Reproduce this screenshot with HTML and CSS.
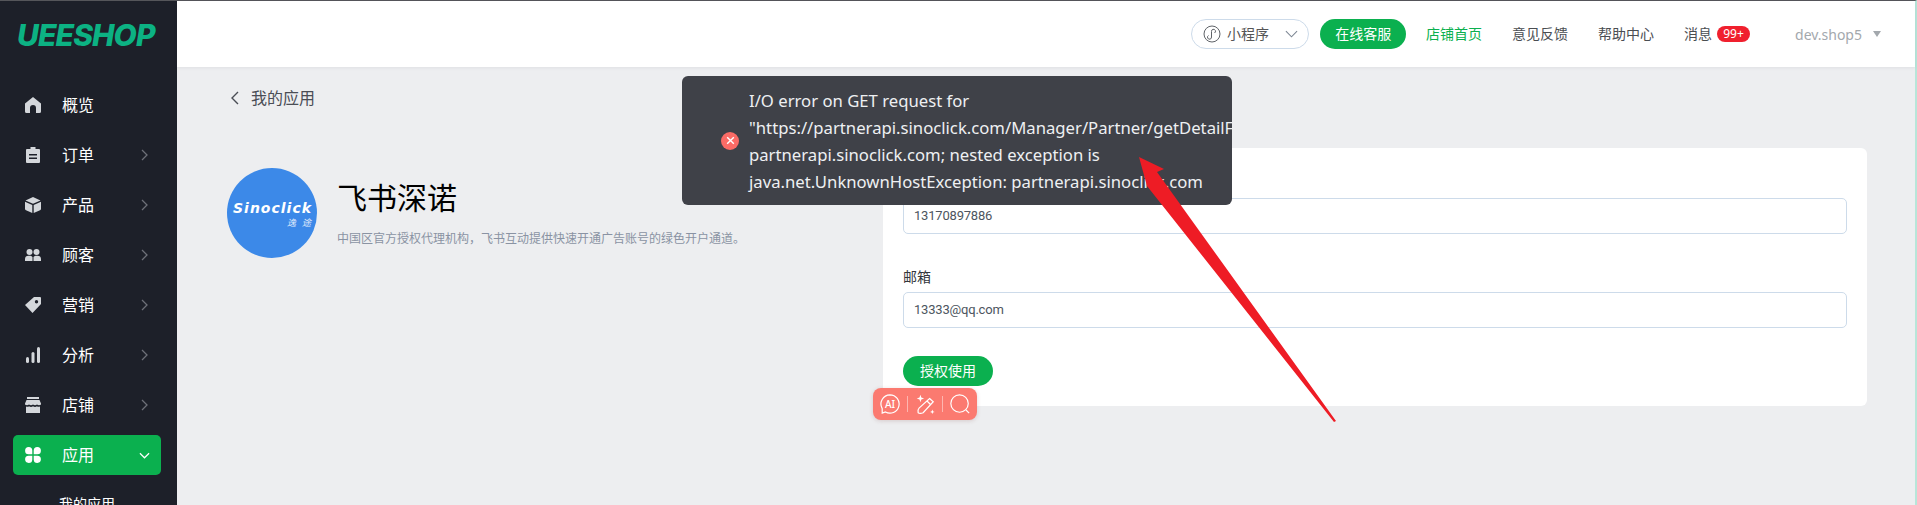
FILE: index.html
```html
<!DOCTYPE html>
<html lang="zh-CN">
<head>
<meta charset="utf-8">
<title>我的应用</title>
<link rel="stylesheet" href="styles.css">
</head>
<body>
<div class="app">
  <aside class="sidebar">
    <div class="logo">UEESHOP</div>
    <nav class="nav">
      <a class="nav-item">
        <svg class="nav-icon" viewBox="0 0 16 16"><path d="M8 0 16 6.500V14.500A1.500 1.500 0 0 1 14.500 16H11V11A3 3 0 0 0 5 11V16H1.500A1.500 1.500 0 0 1 0 14.500V6.500Z"/></svg>
        <span class="nav-label">概览</span>
      </a>
      <a class="nav-item">
        <svg class="nav-icon" viewBox="0 0 16 16"><path fill-rule="evenodd" d="M5.500 0H10.500V2H14A1 1 0 0 1 15 3V15A1 1 0 0 1 14 16H2A1 1 0 0 1 1 15V3A1 1 0 0 1 2 2H5.500ZM4 7V8.500H12V7ZM4 10.500V12H12V10.500Z"/></svg>
        <span class="nav-label">订单</span>
        <svg class="nav-arrow" viewBox="0 0 7 12"><path d="M1 1 6 6 1 11"/></svg>
      </a>
      <a class="nav-item">
        <svg class="nav-icon" viewBox="0 0 16 16"><path d="M8 0 15.500 3.400 8 6.800 .5 3.400ZM0 4.800 7.300 8.100V16L1 13.200A1.500 1.500 0 0 1 0 12ZM16 4.800V12A1.500 1.500 0 0 1 15 13.200L8.700 16V8.100Z"/></svg>
        <span class="nav-label">产品</span>
        <svg class="nav-arrow" viewBox="0 0 7 12"><path d="M1 1 6 6 1 11"/></svg>
      </a>
      <a class="nav-item">
        <svg class="nav-icon" viewBox="0 0 16 16"><circle cx="4.500" cy="5" r="3"/><circle cx="11.500" cy="5" r="3"/><path d="M0 14V12A3.500 3.500 0 0 1 3.500 8.700H5.500A3.500 3.500 0 0 1 7.500 10V14ZM8.500 14V10A3.500 3.500 0 0 1 10.500 8.700H12.500A3.500 3.500 0 0 1 16 12V14Z"/></svg>
        <span class="nav-label">顾客</span>
        <svg class="nav-arrow" viewBox="0 0 7 12"><path d="M1 1 6 6 1 11"/></svg>
      </a>
      <a class="nav-item">
        <svg class="nav-icon" viewBox="0 0 16 16"><path fill-rule="evenodd" d="M9 0H15A1 1 0 0 1 16 1V7L7.500 16 0 8ZM11.500 3A1.700 1.700 0 1 0 11.500 6.400 1.700 1.700 0 1 0 11.500 3Z"/></svg>
        <span class="nav-label">营销</span>
        <svg class="nav-arrow" viewBox="0 0 7 12"><path d="M1 1 6 6 1 11"/></svg>
      </a>
      <a class="nav-item">
        <svg class="nav-icon" viewBox="0 0 16 16"><rect x="1" y="10" width="3" height="6" rx="1.500"/><rect x="6.500" y="5" width="3" height="11" rx="1.500"/><rect x="12" y="0" width="3" height="16" rx="1.500"/></svg>
        <span class="nav-label">分析</span>
        <svg class="nav-arrow" viewBox="0 0 7 12"><path d="M1 1 6 6 1 11"/></svg>
      </a>
      <a class="nav-item">
        <svg class="nav-icon" viewBox="0 0 16 16"><path d="M2 0H14V2H2ZM1.500 3H14.500L16 6.500V7.500Q14 9 12 7.500 10 9 8 7.500 6 9 4 7.500 2 9 0 7.500V6.500ZM1 9.500Q3 10.200 4 9.300 6 10.500 8 9.300 10 10.500 12 9.300 13 10.200 15 9.500V16H1Z"/></svg>
        <span class="nav-label">店铺</span>
        <svg class="nav-arrow" viewBox="0 0 7 12"><path d="M1 1 6 6 1 11"/></svg>
      </a>
      <a class="nav-item is-active">
        <svg class="nav-icon" viewBox="0 0 16 16"><path d="M7.300 7.300H3.600A3.600 3.600 0 1 1 7.300 3.600ZM8.700 7.300V3.600A3.600 3.600 0 1 1 12.400 7.300ZM7.300 8.700V12.400A3.600 3.600 0 1 1 3.600 8.700ZM8.700 8.700H12.400A3.600 3.600 0 1 1 8.700 12.400Z"/></svg>
        <span class="nav-label">应用</span>
        <svg class="nav-arrow-down" viewBox="0 0 12 7"><path d="M1 1 6 6 11 1"/></svg>
      </a>
      <a class="nav-sub">我的应用</a>
    </nav>
  </aside>

  <main class="main">
    <header class="topbar">
      <div class="mini-select">
        <svg class="mini-icon" viewBox="0 0 18 18"><circle cx="9" cy="9" r="8"/><path d="M5.500 10.500A2 2 0 1 0 8.500 12V6.500A2 2 0 1 1 11.500 8"/></svg>
        <span class="lift">小程序</span>
        <svg class="mini-arrow" viewBox="0 0 14 8"><path d="M1 1 7 7 13 1"/></svg>
      </div>
      <a class="service-btn">在线客服</a>
      <a class="top-link is-green">店铺首页</a>
      <a class="top-link">意见反馈</a>
      <a class="top-link">帮助中心</a>
      <a class="top-link msg"><span class="lift">消息</span><span class="badge">99+</span></a>
      <div class="user">dev.shop5<span class="caret"></span></div>
    </header>

    <div class="content">
      <div class="back">
        <svg class="back-icon" viewBox="0 0 9 14"><path d="M8 1 2 7 8 13"/></svg>
        <span class="lift">我的应用</span>
      </div>
      <div class="detail">
        <section class="app-info">
          <div class="avatar">
            <span class="brand">Sinoclick</span>
            <span class="brand-cn">逸途</span>
          </div>
          <div class="app-text">
            <h1 class="app-title">飞书深诺</h1>
            <p class="app-desc">中国区官方授权代理机构，飞书互动提供快速开通广告账号的绿色开户通道。</p>
          </div>
        </section>
        <section class="card">
          <div class="field">
            <label class="field-label">手机</label>
            <div class="input">13170897886</div>
          </div>
          <div class="field">
            <label class="field-label">邮箱</label>
            <div class="input">13333@qq.com</div>
          </div>
          <div class="actions"><a class="primary-btn">授权使用</a></div>
        </section>
      </div>
    </div>
  </main>
</div>

<div class="toast">
  <span class="toast-icon"><svg viewBox="0 0 10 10"><path d="M2 2 8 8M8 2 2 8"/></svg></span>
  <div class="toast-text">
    <div class="toast-line">I/O error on GET request for</div>
    <div class="toast-line">"https://partnerapi.sinoclick.com/Manager/Partner/getDetailForPartner":</div>
    <div class="toast-line">partnerapi.sinoclick.com; nested exception is</div>
    <div class="toast-line">java.net.UnknownHostException: partnerapi.sinoclick.com</div>
  </div>
</div>

<svg class="annotation" viewBox="0 0 1917 505"><polygon points="1139,157 1164,169 1157,172 1336,421 1334,422 1147,186"/></svg>

<div class="ai-bar">
  <svg class="ai-icon" viewBox="0 0 24 24"><path d="M12 2A10 10 0 1 1 7 20.700L3.500 22V17A10 10 0 0 1 12 2Z"/><text x="12" y="16" text-anchor="middle">AI</text></svg>
  <span class="ai-sep"></span>
  <svg class="ai-tool" viewBox="0 0 24 24"><path d="M17 6 21 9.500 10 21.500Q6.500 23 4.500 21.500 4 18 5.500 16.500ZM14.500 9 18 12.500"/><path class="spark" d="M7 2 8 5 11 6 8 7 7 10 6 7 3 6 6 5ZM20 18 20.700 20 22.500 20.700 20.700 21.400 20 23 19.300 21.400 17.500 20.700 19.300 20Z"/></svg>
  <span class="ai-sep"></span>
  <svg class="ai-tool" viewBox="0 0 24 24"><circle cx="11.500" cy="11.500" r="9.500"/><path d="M18.500 18.500 22 22"/></svg>
</div>
</body>
</html>
```
FILE: styles.css
```css
* { box-sizing: border-box; }
html, body { margin: 0; padding: 0; height: 505px; overflow: hidden; }
body {
  position: relative;
  font-family: "Noto Sans CJK SC", "Noto Sans", sans-serif;
  font-size: 14px;
  color: #404852;
  background: #edeef0;
}
.app {
  display: flex;
  height: 505px;
  border-top: 1px solid #55565a;
  border-right: 2px solid #b7e6d9;
}
.lift { padding-bottom: 2px; }

/* sidebar */
.sidebar { width: 177px; flex: none; background: #1d2029; overflow: hidden; }
.logo {
  height: 84px;
  padding: 16px 0 0 17px;
  font-family: Inter, "Liberation Sans", sans-serif;
  font-size: 30px;
  line-height: 36px;
  font-weight: 800;
  font-style: italic;
  letter-spacing: -.9px;
  color: #0cb283;
}
.nav { padding: 0 16px 0 13px; }
.nav-item {
  display: flex;
  align-items: center;
  height: 40px;
  margin-bottom: 10px;
  padding: 0 13px 0 12px;
  border-radius: 5px;
  font-size: 16px;
  color: #fff;
}
.nav-icon { width: 16px; height: 16px; flex: none; fill: #d4d7db; }
.nav-label { margin-left: 21px; padding-bottom: 2px; flex: 1; }
.nav-arrow { width: 7px; height: 12px; flex: none; fill: none; stroke: #6d7078; stroke-width: 1.300; }
.nav-arrow-down { width: 11px; height: 7px; flex: none; margin-right: -2px; fill: none; stroke: #fff; stroke-width: 1.300; }
.nav-item.is-active { margin-bottom: 0; background: #0bb04f; }
.nav-item.is-active .nav-icon { fill: #fff; }
.nav-sub { display: block; padding: 18px 0 0 46px; font-size: 14px; line-height: 20px; color: #fff; }

/* main */
.main { flex: 1; min-width: 0; display: flex; flex-direction: column; }
.topbar {
  height: 66px;
  flex: none;
  display: flex;
  align-items: center;
  padding: 0 34px 0 1014px;
  background: #fff;
  box-shadow: 0 1px 3px rgba(60, 70, 90, .08);
}
.mini-select {
  width: 119px;
  height: 30px;
  display: flex;
  align-items: center;
  padding: 0 10px 0 11px;
  border: 1px solid #cddbea;
  border-radius: 15px;
  font-size: 14px;
  color: #555;
}
.mini-icon { width: 18px; height: 18px; margin-right: 6px; fill: none; stroke: #5f6368; stroke-width: 1; }
.mini-arrow { width: 13px; height: 8px; margin-left: auto; fill: none; stroke: #7d8794; stroke-width: 1.200; }
.service-btn {
  width: 86px;
  height: 30px;
  margin-left: 11px;
  border-radius: 15px;
  background: #0bb04f;
  color: #fff;
  font-size: 14px;
  line-height: 28px;
  text-align: center;
}
.top-link { margin-left: 20px; margin-right: 10px; padding-bottom: 2px; font-size: 14px; color: #4a4d52; white-space: nowrap; }
.top-link.is-green { color: #0bb04f; }
.msg { display: flex; align-items: center; margin-right: 0; padding-bottom: 0; }
.badge {
  width: 33px;
  height: 16px;
  margin-left: 5px;
  border-radius: 8px;
  background: #f0202e;
  color: #fff;
  font-family: "Noto Sans", sans-serif;
  font-size: 12px;
  line-height: 16px;
  text-align: center;
}
.user { display: flex; align-items: center; margin-left: 45px; font-family: "Noto Sans", sans-serif; font-size: 14px; color: #a3a8ad; }
.caret { width: 0; height: 0; margin-left: 11px; border: 4px solid transparent; border-top: 6px solid #a3a8ad; border-bottom: 0; }

.content { flex: 1; padding: 20px 48px 0 50px; }
.back { display: flex; align-items: center; height: 22px; font-size: 16px; color: #4a4d55; }
.back-icon { width: 9px; height: 14px; margin: 0 12px 0 3px; fill: none; stroke: #4a4d55; stroke-width: 1.400; }
.detail { display: flex; margin-top: 39px; }
.app-info { width: 656px; flex: none; display: flex; padding-top: 20px; }
.avatar {
  width: 90px;
  height: 90px;
  flex: none;
  display: flex;
  flex-direction: column;
  align-items: flex-end;
  padding: 32px 6px 0 0;
  border-radius: 50%;
  background: #3c89e8;
  color: #fff;
  overflow: hidden;
}
.brand {
  font-family: "DejaVu Sans", "Liberation Sans", sans-serif;
  font-size: 14px;
  line-height: 16px;
  font-weight: 700;
  font-style: italic;
  letter-spacing: 1px;
  margin-right: -1px;
}
.brand-cn { font-size: 9px; line-height: 13px; font-style: italic; letter-spacing: 6px; margin-right: -6px; opacity: .85; }
.app-text { margin-left: 20px; }
.app-title { margin: 8px 0 0; font-size: 30px; line-height: 40px; font-weight: 400; color: #000; }
.app-desc { margin: 13px 0 0; font-size: 12px; line-height: 18px; color: #8a93a3; }

.card { flex: 1; height: 258px; padding: 25px 20px 20px; border-radius: 6px; background: #fff; }
.field + .field { margin-top: 33px; }
.field-label { display: block; height: 20px; margin-bottom: 5px; font-size: 14px; line-height: 18px; color: #33363c; }
.input {
  height: 36px;
  padding: 0 10px;
  border: 1px solid #cddbea;
  border-radius: 5px;
  font-family: Roboto, "Noto Sans", sans-serif;
  font-size: 13px;
  line-height: 34px;
  letter-spacing: -.2px;
  color: #4d5560;
}
.actions { margin-top: 28px; }
.primary-btn {
  display: block;
  width: 90px;
  height: 30px;
  border-radius: 15px;
  background: #0bb04f;
  color: #fff;
  font-size: 14px;
  line-height: 28px;
  text-align: center;
}

/* overlays */
.toast {
  position: absolute;
  left: 682px;
  top: 76px;
  width: 550px;
  height: 129px;
  display: flex;
  align-items: center;
  padding-left: 39px;
  border-radius: 6px;
  background: #3f4148;
  overflow: hidden;
}
.toast-icon {
  width: 18px;
  height: 18px;
  flex: none;
  display: flex;
  align-items: center;
  justify-content: center;
  border-radius: 50%;
  background: #fb6b66;
}
.toast-icon svg { width: 11px; height: 11px; fill: none; stroke: #fff; stroke-width: 1.300; }
.toast-text { margin-left: 10px; min-width: 0; font-family: "Noto Sans", sans-serif; font-size: 16.700px; line-height: 27px; color: #eef0f2; }
.toast-line { white-space: nowrap; }
.annotation { position: absolute; left: 0; top: 0; width: 1917px; height: 505px; pointer-events: none; }
.annotation polygon { fill: #ee1c25; }
.ai-bar {
  position: absolute;
  left: 873px;
  top: 388px;
  width: 104px;
  height: 32px;
  display: flex;
  align-items: center;
  padding: 0 6px;
  gap: 6px;
  border-radius: 8px;
  background: #fb7a70;
  box-shadow: 0 1px 4px rgba(120, 60, 60, .2);
}
.ai-icon, .ai-tool { width: 22px; height: 22px; flex: none; fill: none; stroke: #fff; stroke-width: 1.300; }
.ai-icon text { fill: #fff; stroke: none; font-family: "Noto Sans", sans-serif; font-size: 11px; font-weight: 500; }
.ai-tool .spark { fill: #fff; stroke: none; }
.ai-sep { width: 1px; height: 16px; flex: none; background: rgba(255, 255, 255, .45); }
```
